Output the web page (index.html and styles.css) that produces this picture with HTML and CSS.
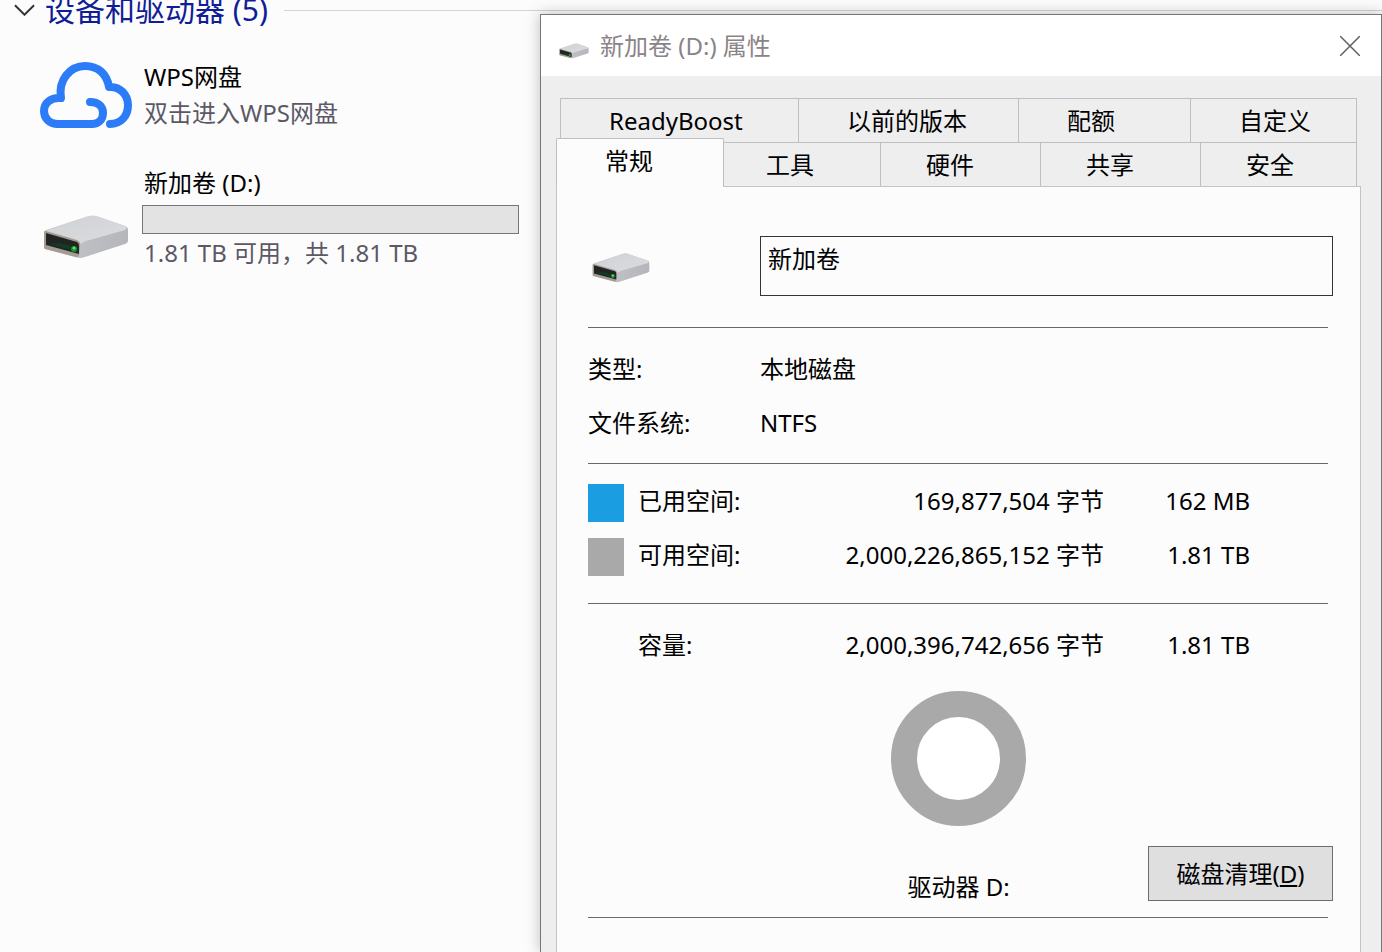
FILE: index.html
```html
<!DOCTYPE html>
<html lang="zh-CN">
<head>
  <meta charset="UTF-8" />
  <meta name="viewport" content="width=device-width, initial-scale=1.0"/>
  <title>新加卷 (D:) 属性</title>
  <link rel="stylesheet" href="styles.css">
</head>
<body>
  <!-- Shared drive icon -->
  <svg class="icon-defs" aria-hidden="true">
    <defs>
      <linearGradient id="drive-top" x1="0" y1="0" x2="1" y2="1">
        <stop offset="0" stop-color="#d0d1d5"/>
        <stop offset="1" stop-color="#dcdde1"/>
      </linearGradient>
      <linearGradient id="drive-side" x1="0" y1="0" x2="1" y2="0">
        <stop offset="0" stop-color="#c6c7cb"/>
        <stop offset="1" stop-color="#b5b6bb"/>
      </linearGradient>
      <symbol id="drive" viewBox="0 0 86 44">
        <path d="M1 17 Q1 16 3 15 L43 2 Q48 0 53 1 L82 11 Q85 12 85 15 L85 26 Q85 28 82 29 L42 42 Q37 44 32 42 L2 34 Q1 33 1 32 Z" fill="url(#drive-side)"/>
        <path d="M2 16 L43 2 Q48 0 53 1 L82 11 Q85 13 82 15 L43 26 Q37 28 34 33 L32 28 Z" fill="url(#drive-top)"/>
        <path d="M1 17 Q1 16 3 16 L34 25 Q38 27 37 31 L36 40 Q36 42 33 42 L2 34 Q1 33 1 32 Z" fill="#a59b93"/>
        <path d="M3 18 L34 27 Q36 28 36 31 L36 39 L3 30 Z" fill="#202522"/>
        <path d="M5 29 L21 33 L35 38 L35 33 L17 28 Z" fill="#123b24"/>
        <circle cx="31" cy="34" r="3" fill="#1e8b35"/>
        <circle cx="31" cy="33" r="1.5" fill="#62e070"/>
      </symbol>
    </defs>
  </svg>

  <main class="explorer">
    <h1 class="group-title">
      <svg class="chevron" viewBox="0 0 22 12"><path d="M1 1 L11 11 L21 1"/></svg>
      <span>设备和驱动器 (5)</span>
    </h1>

    <div class="device">
      <svg class="cloud" viewBox="0 0 92 66">
        <path d="M50 40 C59 40 63 45 63 51 C63 58 58 62 52 62 H18 C9 62 4 56 4 49 C4 41 11 35 21 36 C18 18 30 4 45 4 C58 4 67 12 69 25 C80 24 88 33 88 43 C88 54 81 62 70 62"/>
      </svg>
      <div class="device-info">
        <p class="device-name">WPS网盘</p>
        <p class="device-note">双击进入WPS网盘</p>
      </div>
    </div>

    <div class="device">
      <svg class="drive-large"><use href="#drive"/></svg>
      <div class="device-info">
        <p class="device-name">新加卷 (D:)</p>
        <div class="usage-bar"></div>
        <p class="device-note">1.81 TB 可用，共 1.81 TB</p>
      </div>
    </div>
  </main>

  <section class="dialog" role="dialog" aria-labelledby="dialog-title">
    <header class="title-bar">
      <svg class="drive-small"><use href="#drive"/></svg>
      <h2 id="dialog-title">新加卷 (D:) 属性</h2>
      <button class="close" aria-label="关闭">
        <svg viewBox="0 0 20 20"><path d="M0 0 L20 20 M20 0 L0 20"/></svg>
      </button>
    </header>

    <div class="dialog-body">
      <!-- Tabs -->
      <div class="tabs tabs-back">
        <button class="tab">ReadyBoost</button>
        <button class="tab">以前的版本</button>
        <button class="tab">配额</button>
        <button class="tab">自定义</button>
      </div>
      <div class="tabs tabs-front">
        <button class="tab active">常规</button>
        <button class="tab">工具</button>
        <button class="tab">硬件</button>
        <button class="tab">共享</button>
        <button class="tab">安全</button>
      </div>

      <div class="panel">
        <div class="volume">
          <svg class="drive-medium"><use href="#drive"/></svg>
          <div class="volume-name">
            <input type="text" value="新加卷" aria-label="卷标">
          </div>
        </div>

        <hr>

        <dl class="details">
          <dt>类型:</dt>
          <dd>本地磁盘</dd>
          <dt>文件系统:</dt>
          <dd>NTFS</dd>
        </dl>

        <hr>

        <table class="space used-free">
          <tr>
            <td class="key"><span class="swatch used"></span></td>
            <th>已用空间:</th>
            <td class="bytes">169,877,504 字节</td>
            <td class="size">162 MB</td>
            <td></td>
          </tr>
          <tr>
            <td class="key"><span class="swatch free"></span></td>
            <th>可用空间:</th>
            <td class="bytes">2,000,226,865,152 字节</td>
            <td class="size">1.81 TB</td>
            <td></td>
          </tr>
        </table>

        <hr>

        <table class="space capacity">
          <tr>
            <td class="key"></td>
            <th>容量:</th>
            <td class="bytes">2,000,396,742,656 字节</td>
            <td class="size">1.81 TB</td>
            <td></td>
          </tr>
        </table>

        <div class="chart-row">
          <div class="chart">
            <div class="donut"></div>
            <p>驱动器 D:</p>
          </div>
          <button class="cleanup">磁盘清理(<u>D</u>)</button>
        </div>

        <hr>
      </div>
    </div>
  </section>
</body>
</html>
```
FILE: styles.css
```css
/* Reset and base styles */
* {
  box-sizing: border-box;
  margin: 0;
  padding: 0;
}

body {
  position: relative;
  min-height: 100vh;
  overflow: hidden;
  background-color: #fcfcfd;
  color: #000;
  font-family: "Noto Sans", "Noto Sans CJK SC", sans-serif;
  font-size: 24px;
  line-height: 36px;
}

button,
input {
  font: inherit;
  color: inherit;
}

svg {
  display: block;
  flex: none;
}

.icon-defs {
  position: absolute;
  width: 0;
  height: 0;
}

/* Explorer list */
.group-title {
  display: flex;
  align-items: center;
  gap: 10px;
  height: 20px;
  padding-left: 14px;
  color: #101e96;
  font-size: 30px;
  font-weight: normal;
  line-height: 20px;
  white-space: nowrap;
}

.group-title::after {
  content: "";
  flex: 1;
  height: 1px;
  margin-left: 6px;
  background-color: #d4d4d8;
}

.chevron {
  width: 21px;
  height: 12px;
  fill: none;
  stroke: #333;
  stroke-width: 2;
}

.device {
  display: flex;
  align-items: center;
  width: 519px;
  padding-left: 40px;
}

.group-title + .device {
  margin-top: 39px;
}

.device + .device {
  margin-top: 34px;
}

.device-info {
  flex: 1;
}

.cloud {
  width: 92px;
  height: 66px;
  margin-right: 10px;
  fill: none;
  stroke: #2b7cf6;
  stroke-width: 8;
  stroke-linecap: round;
  stroke-linejoin: round;
}

.drive-large {
  width: 86px;
  height: 44px;
  margin: 38px 13px 0 3px;
}

.device-name,
.device-note {
  padding-left: 2px;
}

.device-note {
  color: #5c5966;
}

.usage-bar {
  height: 29px;
  margin: 4px 0 1px;
  border: 1px solid #77757c;
  background-color: #e3e3e4;
}

/* Properties window */
.dialog {
  position: absolute;
  top: 14px;
  right: 0;
  bottom: 0;
  left: 540px;
  display: flex;
  flex-direction: column;
  border: 1px solid #75757a;
  border-bottom: none;
  background-color: #eeeeef;
  box-shadow: 0 0 14px rgba(0, 0, 0, 0.25);
}

.title-bar {
  display: flex;
  align-items: center;
  height: 61px;
  padding: 0 21px 0 18px;
  background-color: #fff;
}

.title-bar h2 {
  flex: 1;
  color: #8a8388;
  font-size: 24px;
  font-weight: normal;
}

.drive-small {
  width: 30px;
  height: 16px;
  margin: 10px 11px 0 0;
}

.close {
  border: none;
  background: none;
}

.close svg {
  width: 20px;
  height: 20px;
  stroke: #606060;
  stroke-width: 1.5;
}

.dialog-body {
  flex: 1;
  display: flex;
  flex-direction: column;
  padding: 22px 20px 0 15px;
}

/* Tabs */
.tabs {
  display: grid;
  height: 44px;
  margin-right: 4px;
}

.tabs-back {
  grid-template-columns: 238fr 220fr 172fr 167fr;
  margin-left: 4px;
}

.tabs-front {
  grid-template-columns: 168fr 156fr 160fr 160fr 157fr;
}

.tab {
  padding-left: 48px;
  border: 1px solid #bfbfc3;
  border-right: none;
  border-bottom: none;
  background-color: #eeeeef;
  text-align: left;
}

.tab:last-child {
  border-right: 1px solid #bfbfc3;
}

.tabs-front .tab {
  padding-left: 45px;
}

.tabs-front .active {
  z-index: 1;
  height: 49px;
  margin-top: -4px;
  padding: 0 0 4px 48px;
  border-right: 1px solid #bfbfc3;
  border-radius: 2px 2px 0 0;
  background-color: #fcfcfd;
}

.tabs-front .active + .tab {
  padding-left: 42px;
  border-left: none;
}

/* General page */
.panel {
  flex: 1;
  padding: 49px 27px 0 31px;
  border: 1px solid #c3c4c9;
  border-bottom: none;
  background-color: #fcfcfd;
}

.panel hr {
  height: 1px;
  margin-right: 5px;
  border: none;
  background-color: #68686c;
}

.volume {
  display: grid;
  grid-template-columns: 172px 1fr;
  align-items: center;
  margin-bottom: 31px;
}

.drive-medium {
  width: 58px;
  height: 32px;
  margin: 4px 0 0 4px;
}

.volume-name {
  height: 60px;
  padding: 4px 7px;
  border: 1px solid #333338;
}

.volume-name input {
  display: block;
  width: 100%;
  height: 36px;
  border: none;
  outline: none;
  background: none;
}

.details {
  display: grid;
  grid-template-columns: 172px 1fr;
  margin: 14px 0 13px;
  line-height: 54px;
}

.space {
  width: 100%;
  table-layout: fixed;
  border-collapse: collapse;
}

.space tr {
  height: 54px;
}

.space th {
  width: 170px;
  font-weight: normal;
  text-align: left;
}

.space .key {
  width: 50px;
}

.space .bytes {
  width: 296px;
  text-align: right;
}

.space .size {
  width: 146px;
  text-align: right;
}

.used-free {
  margin: 10px 0 21px;
}

.capacity {
  margin: 14px 0 19px;
}

.swatch {
  display: block;
  width: 36px;
  height: 38px;
  margin-top: 4px;
}

.swatch.used {
  background-color: #1b9de2;
}

.swatch.free {
  background-color: #a9a9a9;
}

.chart-row {
  display: grid;
  grid-template-columns: 1fr auto 1fr;
  align-items: end;
  margin-bottom: 12px;
}

.chart {
  grid-column: 2;
  display: flex;
  flex-direction: column;
  align-items: center;
  gap: 43px;
  margin-right: 4px;
}

.donut {
  width: 135px;
  height: 135px;
  border: 26px solid #a9a9a9;
  border-radius: 50%;
  background-color: #fff;
}

.cleanup {
  justify-self: end;
  width: 185px;
  height: 55px;
  margin-bottom: 4px;
  border: 1px solid #6e6e72;
  background-color: #dfdfe0;
}

.cleanup u {
  text-underline-offset: 2px;
}
```
